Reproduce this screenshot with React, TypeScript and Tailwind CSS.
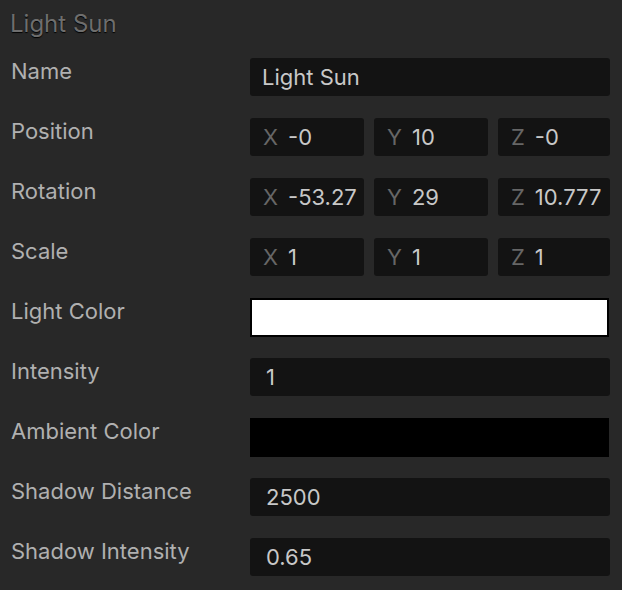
const font = { fontFamily: "Inter, 'Noto Sans', sans-serif" };

const Label = ({ children }: { children: React.ReactNode }) => (
  <div className="pt-[9px] pl-[1px] text-[22px] leading-[28px] text-[#b0b0b0]">{children}</div>
);

const TextBox = ({ value, pad = "pl-[12px]" }: { value: string; pad?: string }) => (
  <div
    className={`mt-[10px] h-[38px] rounded-[3px] bg-[#131313] ${pad} flex items-center text-[22px] text-[#c8c8c8]`}
  >
    {value}
  </div>
);

const Axis = ({ axis, value, w }: { axis: string; value: string; w: string }) => (
  <div className={`${w} h-[38px] rounded-[3px] bg-[#131313] pl-[13px] flex items-center gap-[10px] text-[22px]`}>
    <span className="text-[#666666]">{axis}</span>
    <span className="text-[#c8c8c8]">{value}</span>
  </div>
);

const Vec = ({ x, y, z }: { x: string; y: string; z: string }) => (
  <div className="mt-[10px] flex gap-[10px]">
    <Axis axis="X" value={x} w="w-[114px]" />
    <Axis axis="Y" value={y} w="w-[114px]" />
    <Axis axis="Z" value={z} w="w-[112px]" />
  </div>
);

export default function App() {
  return (
    <div className="w-[622px] h-[590px] bg-[#282828] overflow-hidden" style={font}>
      <div className="h-[48px] pt-[9px] pl-[10px] text-[24px] leading-[30px] text-[#6e6e6e] [text-shadow:0_1px_1px_#000]">
        Light Sun
      </div>
      <div className="pl-[10px] grid grid-cols-[240px_360px] auto-rows-[60px]">
        <Label>Name</Label>
        <TextBox value="Light Sun" />

        <Label>Position</Label>
        <Vec x="-0" y="10" z="-0" />

        <Label>Rotation</Label>
        <Vec x="-53.27" y="29" z="10.777" />

        <Label>Scale</Label>
        <Vec x="1" y="1" z="1" />

        <Label>Light Color</Label>
        <div className="mt-[10px] w-[359px] h-[39px] bg-white border-2 border-black" />

        <Label>Intensity</Label>
        <TextBox value="1" pad="pl-[16px]" />

        <Label>Ambient Color</Label>
        <div className="mt-[10px] w-[359px] h-[39px] bg-black" />

        <Label>Shadow Distance</Label>
        <TextBox value="2500" pad="pl-[16px]" />

        <Label>Shadow Intensity</Label>
        <TextBox value="0.65" pad="pl-[16px]" />
      </div>
    </div>
  );
}
